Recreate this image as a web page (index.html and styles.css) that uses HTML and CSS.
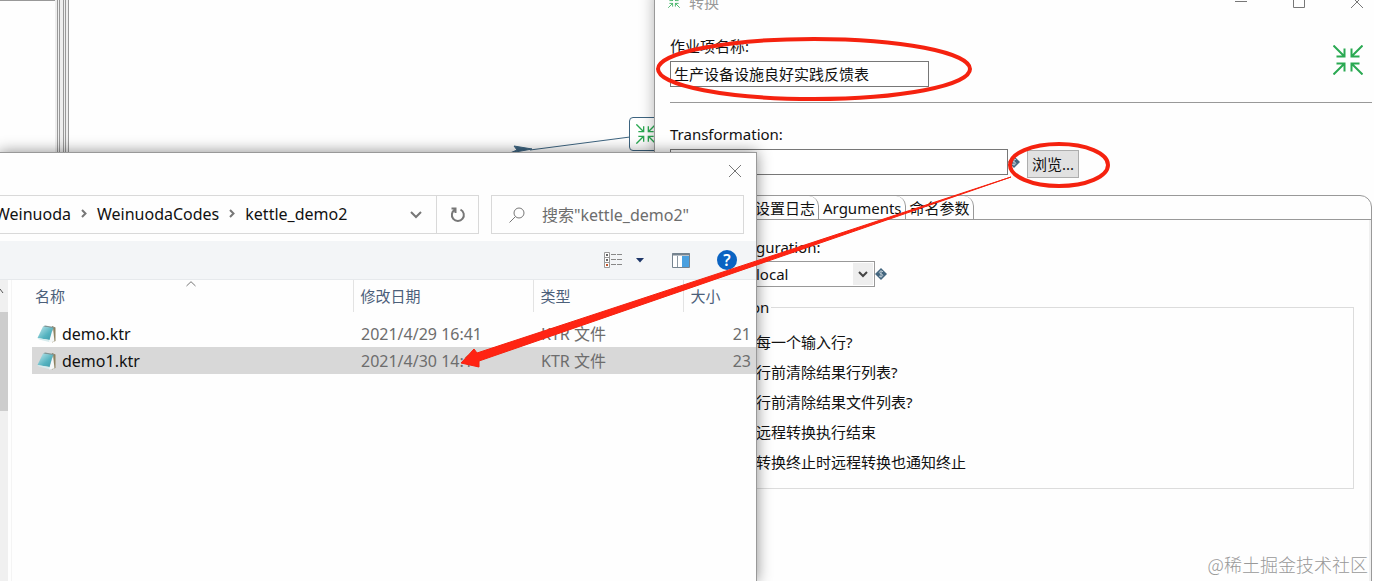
FILE: index.html
```html
<!DOCTYPE html>
<html lang="zh-CN">
<head>
<meta charset="utf-8">
<title>转换</title>
<link rel="stylesheet" href="styles.css">
</head>
<body>
<svg class="symbols" aria-hidden="true">
  <symbol id="converge" viewBox="0 0 30 30">
    <path d="M0.500 0.500 11.500 11.500M11.500 3.500V11.500H3.500M29.500 0.500 18.500 11.500M18.500 3.500V11.500H26.500M0.500 29.500 11.500 18.500M3.500 18.500H11.500V26.500M29.500 29.500 18.500 18.500M26.500 18.500H18.500V26.500" fill="none" stroke="#2aa952" stroke-width="2"/>
  </symbol>
  <symbol id="variable" viewBox="0 0 12 12">
    <path d="M6 0 12 6 6 12 0 6Z" fill="#44667f"/>
    <path d="M8 3.700C6.500 2.800 4.200 3.200 4.300 4.600 4.500 6 7.800 5.700 7.800 7.300 7.800 8.800 5.300 9 4 8M6 2.300V9.700" fill="none" stroke="#b9c8d2" stroke-width="1"/>
  </symbol>
</svg>
<main class="desktop">
  <div class="workspace">
    <div class="side-panel"></div>
    <div class="sash"><i></i><i></i><i></i><i></i><i></i></div>
    <div class="graph"></div>
  </div>
  <svg class="hop" width="150" height="40" viewBox="0 0 150 40" aria-hidden="true">
    <path d="M120 21 20 34" stroke="#3d6480" fill="none"/>
    <path d="M4 30 22 33 0 37 7 34Z" fill="#3d6480" stroke="#3d6480"/>
  </svg>
  <div class="node"><svg width="20" height="20"><use href="#converge"/></svg></div>

  <section class="window settings">
    <header class="titlebar">
      <svg width="12" height="12"><use href="#converge"/></svg>
      <span class="title">转换</span>
      <button class="caption" aria-label="最小化"><svg width="12" height="12"><path d="M0 5.500H12"/></svg></button>
      <button class="caption" aria-label="最大化"><svg width="12" height="12"><path d="M.5.5H11.500V11.500H.5Z"/></svg></button>
      <button class="caption" aria-label="关闭"><svg width="12" height="12"><path d="M0 0 12 12M12 0 0 12"/></svg></button>
    </header>
    <div class="identity">
      <div class="field">
        <label for="job">作业项名称:</label>
        <input id="job" class="textbox job" value="生产设备设施良好实践反馈表">
      </div>
      <svg width="30" height="30"><use href="#converge"/></svg>
    </div>
    <div class="source">
      <label for="trans">Transformation:</label>
      <div class="source-row">
        <input id="trans" class="textbox path">
        <svg width="12" height="12"><use href="#variable"/></svg>
        <button class="browse">浏览...</button>
      </div>
    </div>
    <div class="folder">
      <div class="tabs" role="tablist">
        <button class="tab" role="tab">设置日志</button>
        <button class="tab" role="tab">Arguments</button>
        <button class="tab" role="tab">命名参数</button>
      </div>
      <div class="panel">
        <label class="run-label" for="run">guration:</label>
        <div class="run-row">
          <div class="combo">
            <select id="run"><option>local</option></select>
            <span class="drop"><svg width="10" height="7"><path d="M1 1 5 5 9 1"/></svg></span>
          </div>
          <svg width="12" height="12"><use href="#variable"/></svg>
        </div>
        <fieldset class="group">
          <legend>on</legend>
          <ul>
            <li>每一个输入行?</li>
            <li>行前清除结果行列表?</li>
            <li>行前清除结果文件列表?</li>
            <li>远程转换执行结束</li>
            <li>转换终止时远程转换也通知终止</li>
          </ul>
        </fieldset>
      </div>
    </div>
  </section>

  <section class="window chooser">
    <header class="chooser-title">
      <button class="caption" aria-label="关闭"><svg width="12" height="12"><path d="M0 0 12 12M12 0 0 12"/></svg></button>
    </header>
    <div class="navbar">
      <nav class="address">
        <a href="#">Weinuoda</a>
        <svg width="6" height="9"><path d="M1 1 4.500 4.500 1 8"/></svg>
        <a href="#">WeinuodaCodes</a>
        <svg width="6" height="9"><path d="M1 1 4.500 4.500 1 8"/></svg>
        <a href="#">kettle_demo2</a>
        <button class="history" aria-label="历史"><svg width="12" height="8"><path d="M1 1 6 6 11 1"/></svg></button>
      </nav>
      <button class="refresh" aria-label="刷新"><svg width="16" height="16"><path d="M10.500 2.600A6 6 0 1 1 5 2.700M1.500 1.500H5.500V6"/></svg></button>
      <div class="search">
        <svg width="16" height="16"><circle cx="10" cy="6" r="5"/><path d="M6.500 9.500.5 15.500"/></svg>
        <input aria-label="搜索" placeholder='搜索"kettle_demo2"'>
      </div>
    </div>
    <div class="toolbar">
      <button aria-label="视图">
        <svg width="19" height="16"><path d="M.5.5H5.500V15.500H.5ZM.5 5.500H5.500M.5 10.500H5.500" fill="#fff" stroke="#999"/><path d="M2 3H4M2 8H4" stroke="#666" stroke-width="2"/><path d="M2 13H4" stroke="#c0562d" stroke-width="2"/><path d="M7 2.500H12M13 2.500H18M7 7.500H12M13 7.500H18M7 12.500H12M13 12.500H18" stroke="#888"/></svg>
      </button>
      <button class="view-more" aria-label="更多"><svg width="8" height="5"><path d="M0 0H8L4 4.500Z" fill="#1e3668"/></svg></button>
      <button class="preview" aria-label="预览窗格">
        <svg width="18" height="15"><path d="M.5.5H17.500V14.500H.5Z" fill="#fff" stroke="#75838f"/><path d="M0 1.500H18" stroke="#75838f" stroke-width="2"/><path d="M5.500 3V14" stroke="#8b98a3"/><path d="M10 3H17V14H10Z" fill="#4aa0df"/></svg>
      </button>
      <button class="help" aria-label="帮助">?</button>
    </div>
    <div class="files">
      <div class="scroll"><svg width="4" height="6"><path d="M-2 5 0 1 3 5" fill="none" stroke="#555"/></svg><div class="thumb"></div></div>
      <div class="listing">
        <table>
          <colgroup><col class="c-name"><col class="c-date"><col class="c-type"><col></colgroup>
          <thead><tr>
            <th><svg class="sort" width="10" height="6"><path d="M.5 5 5 .7 9.500 5"/></svg>名称</th>
            <th>修改日期</th><th>类型</th><th>大小</th>
          </tr></thead>
          <tbody>
            <tr>
              <td><span class="file"><svg width="20" height="18"><use href="#doc"/></svg>demo.ktr</span></td>
              <td>2021/4/29 16:41</td><td>KTR 文件</td><td class="size">21</td>
            </tr>
            <tr class="selected">
              <td><span class="file"><svg width="20" height="18"><use href="#doc"/></svg>demo1.ktr</span></td>
              <td>2021/4/30 14:11</td><td>KTR 文件</td><td class="size">23</td>
            </tr>
          </tbody>
        </table>
      </div>
    </div>
  </section>

  <svg class="symbols" aria-hidden="true">
    <defs>
      <linearGradient id="page" x1="0" y1="0" x2="1" y2="1"><stop offset="0" stop-color="#c4eaee"/><stop offset=".6" stop-color="#55b3c0"/><stop offset="1" stop-color="#3c98a8"/></linearGradient>
    </defs>
    <symbol id="doc" viewBox="0 0 20 18">
      <path d="M15 1 18.500 2.500V16L15 17.500Z" fill="#8d8260"/>
      <path d="M16 3 17.500 16.500 12 17.500Z" fill="#f5f8f8"/>
      <path d="M6 1.500 8 .5 17 2 16.500 4Z" fill="#7f9494"/>
      <path d="M6 1.500 16 3 12.500 15 .5 13Z" fill="url(#page)"/>
      <path d="M.5 13 12.500 15 12 17 2 14.500Z" fill="#d7ecee"/>
    </symbol>
  </svg>
  <svg class="marks" width="1374" height="581" viewBox="0 0 1374 581" aria-hidden="true">
    <ellipse cx="814" cy="69" rx="156" ry="30"/>
    <ellipse cx="1059" cy="165" rx="49" ry="21"/>
    <path d="M1011 177 477 353 474 349 461 363 479 367 479 361Z"/>
  </svg>
  <div class="watermark">@稀土掘金技术社区</div>
</main>
</body>
</html>
```

FILE: styles.css
```css
* { box-sizing: border-box; }

body {
  margin: 0;
  color: #111;
  font: 15px/20px "Noto Sans", "Noto Sans CJK SC", sans-serif;
}

button, input, select { font: inherit; color: inherit; }
button { padding: 0; border: 0; background: none; }
svg { display: block; flex: none; }
.symbols { position: absolute; width: 0; height: 0; }

.desktop {
  position: relative;
  height: 100vh;
  overflow: hidden;
  background: #fefefe;
}

/* canvas behind the dialogs */
.workspace { display: flex; height: 100%; }
.side-panel { width: 55px; border-top: 1px solid #999; }
.sash {
  display: flex;
  gap: 2px;
  width: 14px;
  padding-left: 2px;
  background: #eee;
}
.sash i { width: 1px; background: #999; }
.sash i:nth-child(2) { margin-left: -1px; }
.sash i:nth-child(3) { margin-left: 1px; }
.sash i:nth-child(4) { margin-left: -1px; }
.graph { flex: 1; }
.hop { position: absolute; left: 510px; top: 116px; }
.node {
  position: absolute;
  left: 629px;
  top: 117px;
  padding: 6px;
  border: 1px solid #3d6480;
  border-radius: 4px;
  background: #fff;
}

.window {
  position: absolute;
  border: 1px solid #999;
  background: #fefefe;
}
.caption svg, .sort { fill: none; stroke: #777; }

/* transformation settings */
.settings {
  top: -10px;
  left: 654px;
  right: 0;
  bottom: -10px;
  display: flex;
  flex-direction: column;
  border-right: 0;
  padding: 0 2px 0 15px;
  box-shadow: 0 0 14px rgba(0, 0, 0, .3);
}
.titlebar { display: flex; align-items: center; height: 22px; padding-right: 9px; }
.title { flex: 1; margin-left: 9px; color: #999; }
.caption + .caption { margin-left: 46px; }
.titlebar > svg { margin-left: -2px; }

.identity {
  display: flex;
  align-items: center;
  justify-content: space-between;
  height: 90px;
  padding: 8px 9px 0 0;
  border-bottom: 1px solid #999;
}
.identity > svg { margin-bottom: 4px; }
.field, .source { display: flex; flex-direction: column; gap: 5px; }
.source { padding-top: 21px; }
.textbox {
  height: 26px;
  padding: 0 3px 2px;
  border: 1px solid #777;
  border-radius: 0;
  background: #fff;
}
.job { width: 259px; }
.path { width: 338px; }
.source-row { display: flex; align-items: flex-start; }
.source-row svg { margin-top: 7px; }
.browse {
  height: 28px;
  width: 52px;
  margin: 1px 0 0 7px;
  border: 1px solid #adadad;
  background: #e1e1e1;
}

.folder {
  flex: 1;
  margin-top: 17px;
  border: 1px solid #999;
  border-radius: 0 12px 0 0;
}
.tabs {
  display: flex;
  height: 24px;
  padding-left: 80px;
  border-bottom: 1px solid #999;
}
.tab {
  padding: 0 3px 0 4px;
  border-right: 1px solid #999;
  border-radius: 0 10px 0 0;
}
.panel {
  height: 100%;
  padding: 17px 15px 0 19px;
  border-right: 2px solid #f0f0f0;
}
.run-label { display: block; margin-left: 66px; }
.run-row { display: flex; align-items: center; margin-top: 4px; }
.combo { position: relative; width: 185px; height: 26px; }
.combo select {
  width: 100%;
  height: 100%;
  padding: 0 24px 0 65px;
  border: 1px solid #999;
  border-radius: 0;
  background: #fff;
  appearance: none;
}
.drop {
  position: absolute;
  top: 2px;
  right: 2px;
  bottom: 2px;
  display: grid;
  place-items: center;
  width: 20px;
  background: #eee;
  pointer-events: none;
}
.drop path { fill: none; stroke: #444; stroke-width: 2; }
.group {
  margin: 10px 0 0;
  padding: 10px 0 11px 65px;
  border: 1px solid #dcdcdc;
}
.group legend { margin-left: -7px; padding: 0 2px; }
.group ul { margin: 0; padding: 0; list-style: none; }
.group li { line-height: 30px; }

/* file chooser */
.chooser {
  left: -1px;
  top: 152px;
  bottom: -1px;
  width: 758px;
  display: flex;
  flex-direction: column;
  font-size: 16px;
  box-shadow: 0 0 14px rgba(0, 0, 0, .45);
}
.chooser-title { display: flex; justify-content: flex-end; padding: 12px 15px 18px 0; }
.navbar { display: flex; height: 39px; padding-right: 12px; }
.address {
  flex: 1;
  display: flex;
  align-items: center;
  gap: 10px;
  padding-bottom: 2px;
  border: 1px solid #d9d9d9;
  border-left: 0;
}
.address a { color: #111; text-decoration: none; }
.address a:first-child { margin-left: -5px; }
.address svg, .refresh svg { fill: none; stroke: #777; stroke-width: 2; }
.history { margin: 2px 14px 0 auto; }
.refresh {
  display: grid;
  place-items: center;
  width: 42px;
  border: 1px solid #d9d9d9;
  border-left: 0;
}
.search {
  display: flex;
  align-items: center;
  gap: 17px;
  width: 253px;
  margin-left: 12px;
  padding: 0 17px;
  border: 1px solid #d9d9d9;
}
.search svg { fill: none; stroke: #777; }
.search input { flex: 1; min-width: 0; padding: 0; border: 0; outline: 0; background: none; }
.search input::placeholder { color: #6d6d6d; opacity: 1; }
.toolbar {
  display: flex;
  align-items: center;
  justify-content: flex-end;
  height: 39px;
  margin-top: 7px;
  padding-right: 19px;
  border-bottom: 1px solid #e6e9ec;
  background: #f3f5f7;
}
.view-more { margin-left: 13px; }
.preview { margin-left: 28px; }
.help {
  width: 20px;
  height: 20px;
  margin-left: 27px;
  border-radius: 50%;
  background: #0a63c2;
  color: #fff;
  font-weight: 600;
}
.files { flex: 1; display: flex; }
.scroll { width: 8px; padding-top: 8px; background: #f0f0f0; }
.thumb { height: 99px; margin-top: 18px; background: #cdcdcd; }
.listing { flex: 1; margin-left: 3px; padding-left: 20px; border-left: 1px solid #f4f4f4; }
table { width: 100%; border-collapse: collapse; table-layout: fixed; color: #6d6d6d; }
.c-name { width: 321px; }
.c-date { width: 180px; }
.c-type { width: 150px; }
th {
  position: relative;
  height: 32px;
  padding: 0 0 0 7px;
  border-right: 1px solid #e3e3e3;
  color: #4c607a;
  font-size: 15px;
  font-weight: 400;
  text-align: left;
}
th:first-child { padding-left: 3px; }
th:last-child { border-right: 0; }
.sort { position: absolute; top: 1px; left: 154px; }
td { height: 27px; padding: 0 0 0 8px; }
td:first-child { padding-left: 5px; color: #111; }
tbody::before { content: ""; display: block; height: 8px; }
.selected { background: #d8d8d8; }
.file { display: flex; align-items: center; gap: 5px; }
td.size { padding: 0 5px 0 0; text-align: right; }

/* red annotations */
.marks { position: absolute; top: 0; left: 0; pointer-events: none; }
.marks ellipse { fill: none; stroke: #f5220f; stroke-width: 4; }
.marks path { fill: #ff2413; stroke: #f5220f; }
.watermark {
  position: absolute;
  right: 6px;
  bottom: 5px;
  color: #999;
  font: 300 18px/24px "Noto Sans CJK SC", sans-serif;
}
```
